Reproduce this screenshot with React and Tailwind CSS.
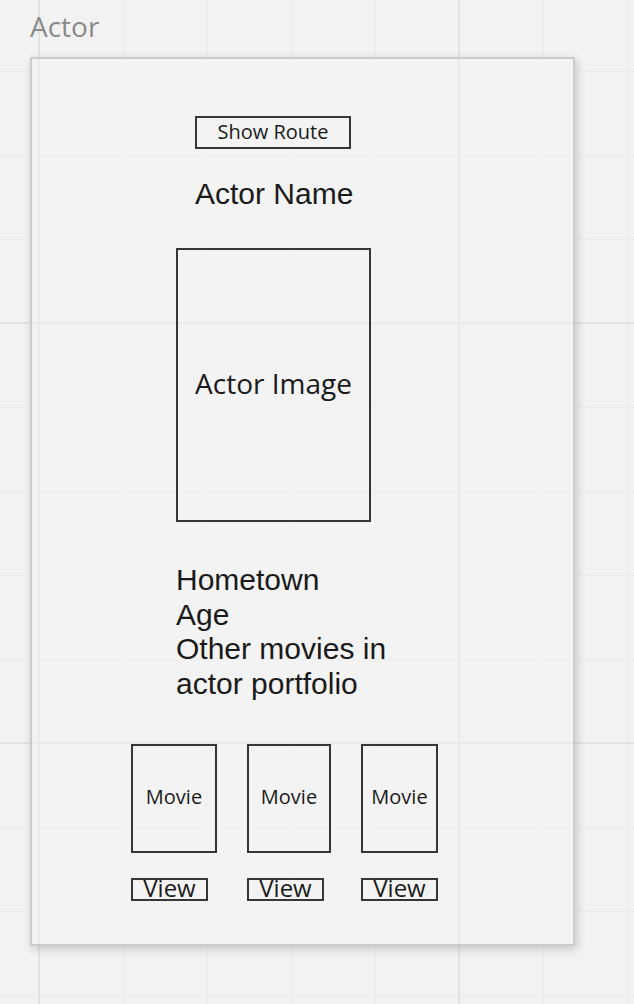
export default function App() {
  const movies = [
    { w: "w-[86px]", vw: "w-[77px]" },
    { w: "w-[84px]", vw: "w-[77px]" },
    { w: "w-[77px]", vw: "w-[77px]" },
  ];

  return (
    <div className="w-[634px] h-[1004px] overflow-hidden bg-[#f2f2f2] bg-[image:linear-gradient(to_right,#e3e3e3_2px,transparent_2px),linear-gradient(to_bottom,#e3e3e3_2px,transparent_2px),linear-gradient(to_right,#ebebeb_1px,transparent_1px),linear-gradient(to_bottom,#ebebeb_1px,transparent_1px)] bg-[size:420px_420px,420px_420px,84px_84px,84px_84px] bg-[position:38px_322px,38px_322px,39px_71px,39px_71px]">
      {/* frame label */}
      <div className="pt-[7px] pl-[30px] font-['Open_Sans',sans-serif] text-[28px] leading-[38px] text-[#8a8a8a]">
        Actor
      </div>

      {/* frame */}
      <div className="mt-[12px] ml-[30px] w-[545px] h-[889px] border-2 border-[#cbcbcb] bg-[#f4f4f4]/40 shadow-[2px_3px_9px_rgba(0,0,0,0.18)] pt-[57px] text-[#1a1a1a]">
        <div className="ml-[163px] w-[156px] h-[33px] border-2 border-[#363636] flex items-center justify-center pb-[3px] font-['Open_Sans',sans-serif] text-[20px] leading-[27px]">
          Show Route
        </div>

        <div className="ml-[163px] mt-[28px] font-['Liberation_Sans',Arial,sans-serif] text-[30px] leading-[34px]">
          Actor Name
        </div>

        <div className="ml-[144px] mt-[37px] w-[195px] h-[274px] border-2 border-[#363636] flex items-center justify-center pb-[4px] font-['Open_Sans',sans-serif] text-[28px] leading-[36px]">
          Actor Image
        </div>

        <div className="ml-[144px] mt-[41px] font-['Liberation_Sans',Arial,sans-serif] text-[30px] leading-[34.5px]">
          <div>Hometown</div>
          <div>Age</div>
          <div>Other movies in</div>
          <div>actor portfolio</div>
        </div>

        <div className="ml-[99px] mt-[43px] flex gap-[30px] font-['Open_Sans',sans-serif]">
          {movies.map((m, i) => (
            <div key={i} className="flex flex-col">
              <div className={`${m.w} h-[109px] border-2 border-[#363636] flex items-center justify-center pb-[4px] text-[20px] leading-[27px]`}>
                Movie
              </div>
              <div className={`${m.vw} h-[23px] mt-[25px] border-2 border-[#363636] text-center text-[24px] leading-[15px]`}>
                View
              </div>
            </div>
          ))}
        </div>
      </div>
    </div>
  );
}
